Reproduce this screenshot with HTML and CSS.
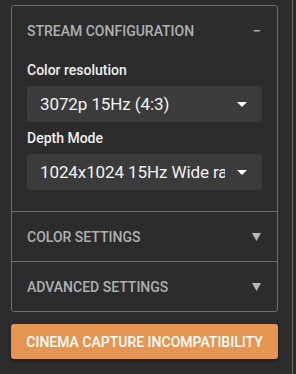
FILE: index.html
```html
<!DOCTYPE html>
<html lang="en">
<head>
    <meta charset="UTF-8">
    <title>Stream configuration</title>
    <link rel="stylesheet" href="styles.css">
</head>
<body>
    <div class="sidebar">
        <div class="panel-group">
            <div class="panel">
                <div class="panel-header">
                    <span>Stream Configuration</span>
                    <span class="minus">&minus;</span>
                </div>
                <div class="panel-body">
                    <label>Color resolution</label>
                    <div class="select">
                        <span class="value">3072p 15Hz (4:3)</span>
                        <svg class="caret" width="10" height="5" viewBox="0 0 10 5"><path d="M0 0h10L5 5z" fill="#fff"/></svg>
                    </div>
                    <label>Depth Mode</label>
                    <div class="select">
                        <span class="value">1024x1024 15Hz Wide raw</span>
                        <svg class="caret" width="10" height="5" viewBox="0 0 10 5"><path d="M0 0h10L5 5z" fill="#fff"/></svg>
                    </div>
                </div>
            </div>
            <div class="panel">
                <div class="panel-header">
                    <span>Color Settings</span>
                    <svg width="9" height="8" viewBox="0 0 9 8"><path d="M0 0h9L4.5 8z" fill="#b4b8bc"/></svg>
                </div>
            </div>
            <div class="panel">
                <div class="panel-header">
                    <span>Advanced Settings</span>
                    <svg width="9" height="8" viewBox="0 0 9 8"><path d="M0 0h9L4.5 8z" fill="#b4b8bc"/></svg>
                </div>
            </div>
        </div>
        <button class="warning">Cinema Capture Incompatibility</button>
    </div>
</body>
</html>
```

FILE: styles.css
```css
body {
    margin: 0;
    background-color: #2c2c2c;
    font-family: Roboto, "Liberation Sans", sans-serif;
}

.sidebar {
    width: 293px;
    height: 374px;
    box-sizing: border-box;
    padding: 5px 14px 0 11px;
    border-right: 1px solid #75684f;
}

.panel-group {
    border: 1px solid #6e6e6e;
    border-radius: 3px;
}

.panel + .panel {
    border-top: 1px solid #6e6e6e;
}

.panel-header {
    display: flex;
    align-items: center;
    justify-content: space-between;
    height: 49px;
    padding: 0 16px 0 15px;
    color: #aeb1b4;
    font-size: 14px;
    font-weight: 500;
    text-transform: uppercase;
}

.minus {
    font-size: 15px;
}

.panel-body {
    padding: 7px 15px 21px 15px;
}

.panel-body label {
    display: block;
    color: #f0f0f0;
    font-size: 14px;
    line-height: 16px;
    font-weight: 500;
    margin: 0 0 8px;
}

.select {
    display: flex;
    align-items: center;
    height: 36px;
    padding: 0 15px 0 13px;
    margin-bottom: 8px;
    background-color: #3b3b3b;
    border-radius: 3px;
    color: #f2f2f2;
    font-size: 17px;
    letter-spacing: -0.1px;
}

.select:last-child {
    margin-bottom: 0;
}

.value {
    flex: 1;
    white-space: nowrap;
    overflow: hidden;
}

.caret {
    margin-left: 12px;
}

.warning {
    display: block;
    width: 100%;
    height: 35px;
    margin-top: 12px;
    border: none;
    border-radius: 3px;
    background-color: #e59551;
    color: #fff;
    font-family: Roboto, "Liberation Sans", sans-serif;
    font-size: 14px;
    font-weight: 500;
    text-transform: uppercase;
    box-shadow: 0 2px 3px rgba(0, 0, 0, 0.35);
}
```
